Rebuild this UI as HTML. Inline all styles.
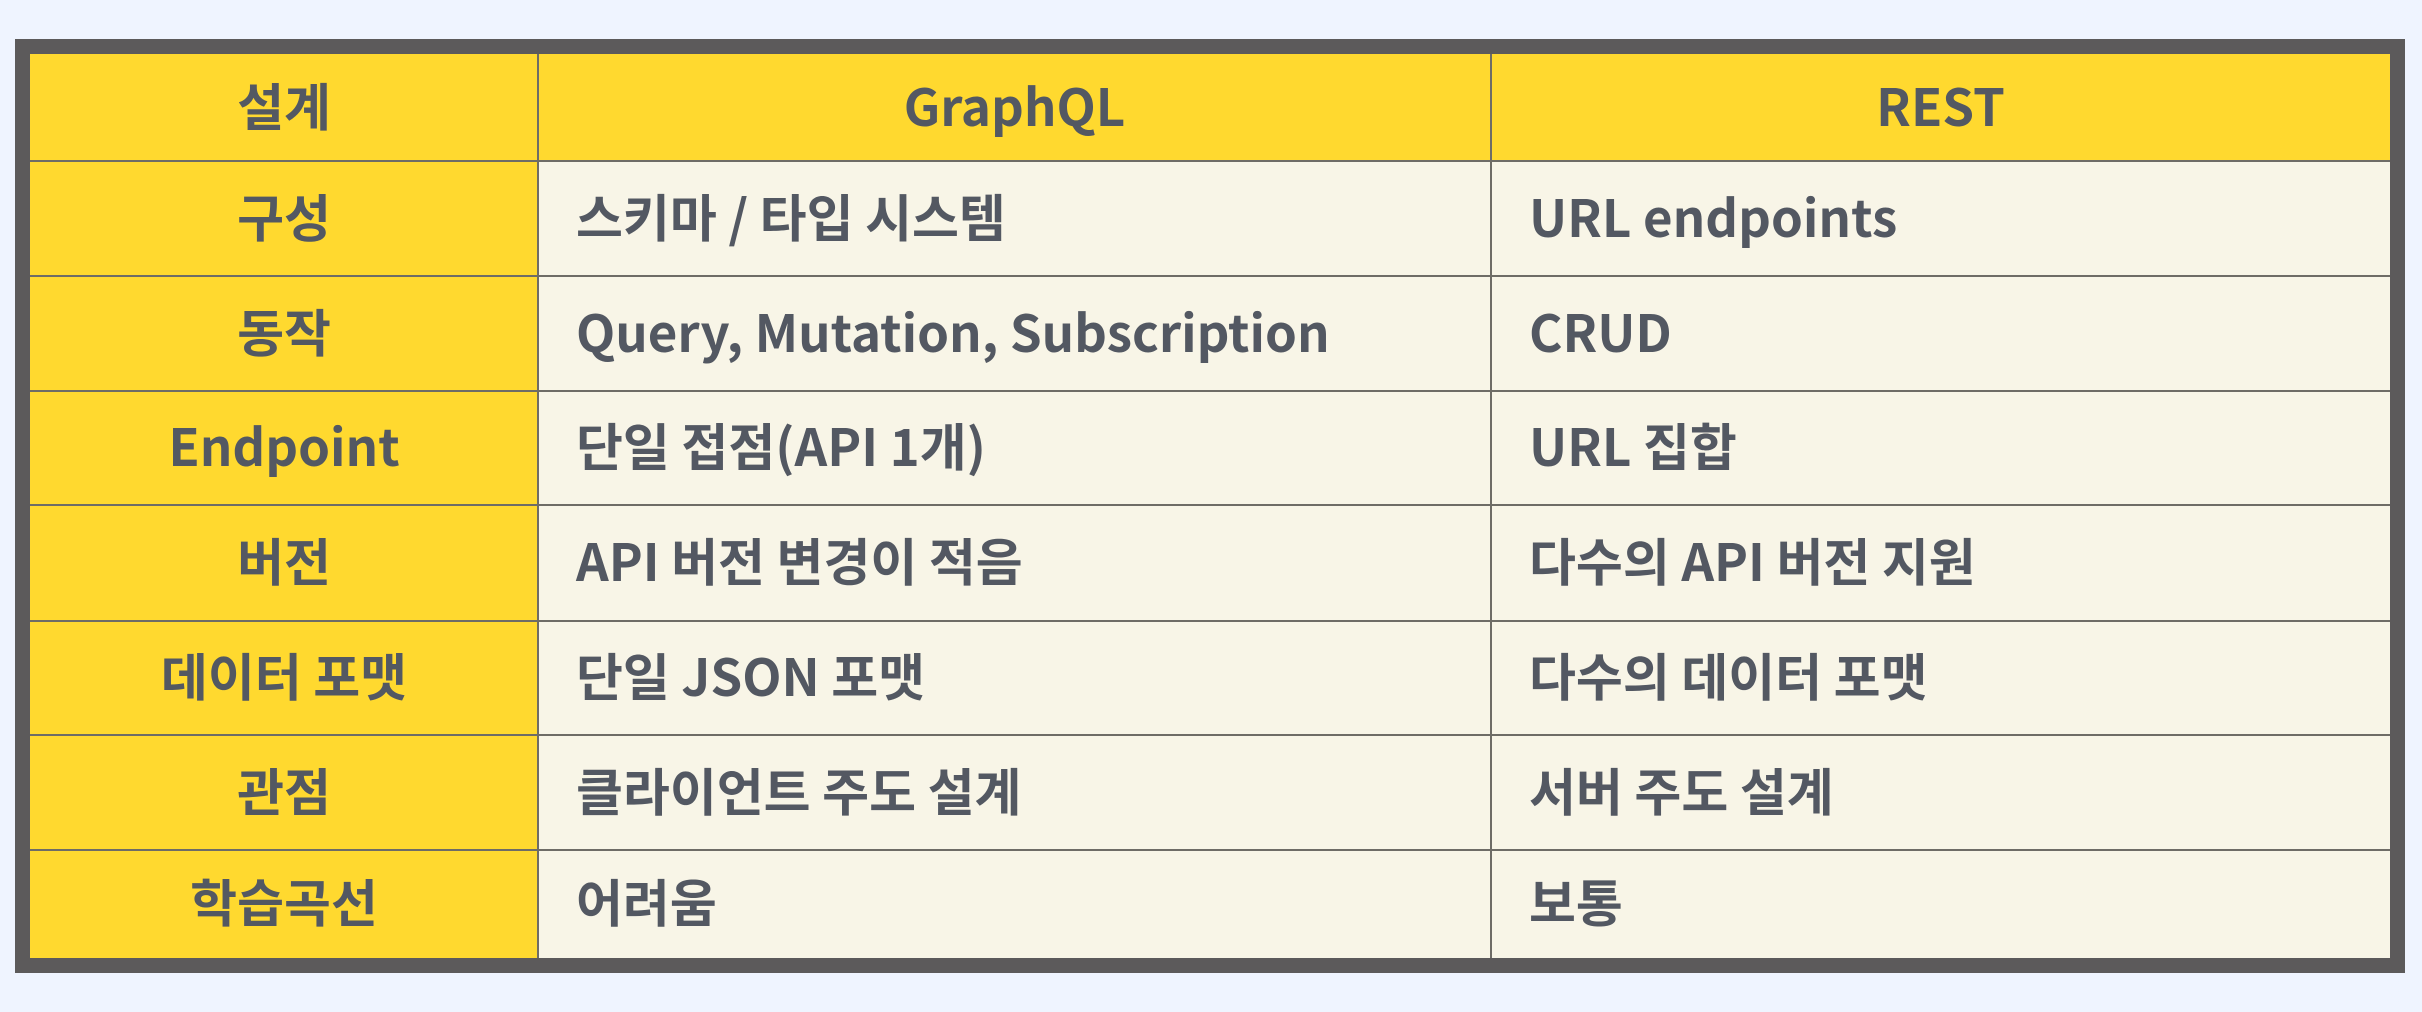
<!DOCTYPE html>
<html><head><meta charset="utf-8"><style>
body{margin:0;width:2422px;height:1012px;background:#eff4ff;position:relative;overflow:hidden;font-family:"Noto Sans CJK KR","Liberation Sans",sans-serif;font-weight:bold;color:#535862}
.frame{position:absolute;left:15px;top:39px;width:2390px;height:934px;background:#5c5a5b}
.c{position:absolute;display:flex;align-items:center;font-size:51px;box-sizing:border-box;white-space:nowrap;padding-bottom:8px}
.y{background:#ffd92f;justify-content:center}
.w{background:#f8f5e7;padding-left:38px}
.hl{position:absolute;height:2px;background:#6e6c66}
.vl{position:absolute;width:2px;background:#6e6c66}
</style></head><body>
<div class="frame"></div>
<div id="g"></div>
<script>
var rows=[["설계","GraphQL","REST"],["구성","스키마 / 타입 시스템","URL endpoints"],["동작","Query, Mutation, Subscription","CRUD"],["Endpoint","단일 접점(API 1개)","URL 집합"],["버전","API 버전 변경이 적음","다수의 API 버전 지원"],["데이터 포맷","단일 JSON 포맷","다수의 데이터 포맷"],["관점","클라이언트 주도 설계","서버 주도 설계"],["학습곡선","어려움","보통"]];
var ys=[54,161,276,391,505,621,735,850,958];
var xs=[30,538,1491,2390];
var h="";
for(var r=0;r<8;r++){for(var c=0;c<3;c++){
var cls=(r==0||c==0)?"y":"w";
h+='<div class="c '+cls+'" style="left:'+xs[c]+'px;top:'+ys[r]+'px;width:'+(xs[c+1]-xs[c])+'px;height:'+(ys[r+1]-ys[r])+'px;">'+rows[r][c]+'</div>';}}
for(var r=1;r<8;r++)h+='<div class="hl" style="left:30px;width:2360px;top:'+(ys[r]-1)+'px"></div>';
h+='<div class="vl" style="left:537px;top:54px;height:904px"></div><div class="vl" style="left:1490px;top:54px;height:904px"></div>';
document.getElementById("g").innerHTML=h;
</script>
</body></html>
